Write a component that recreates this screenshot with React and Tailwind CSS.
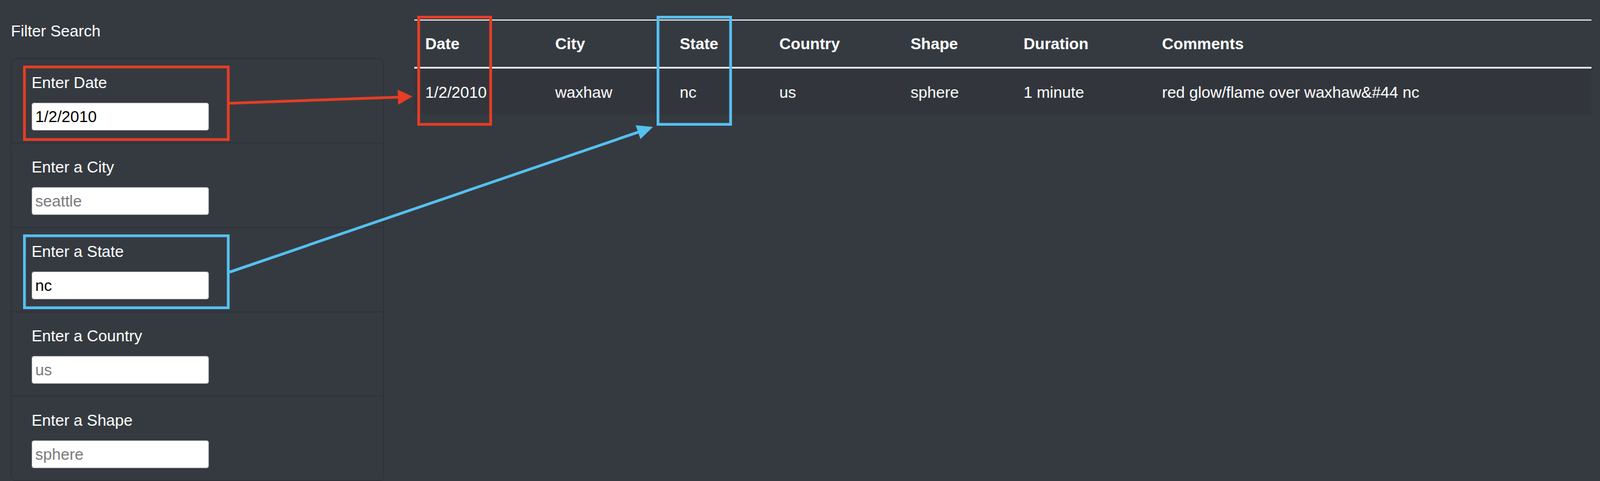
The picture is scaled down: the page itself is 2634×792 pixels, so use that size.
import React from "react";

const fields = [
  { label: "Enter Date", value: "1/2/2010", placeholder: "1/1/2010" },
  { label: "Enter a City", value: "", placeholder: "seattle" },
  { label: "Enter a State", value: "nc", placeholder: "ca" },
  { label: "Enter a Country", value: "", placeholder: "us" },
  { label: "Enter a Shape", value: "", placeholder: "sphere" },
];

const headers = ["Date", "City", "State", "Country", "Shape", "Duration", "Comments"];
const row = ["1/2/2010", "waxhaw", "nc", "us", "sphere", "1 minute", "red glow/flame over waxhaw&#44 nc"];

export default function App() {
  return (
    <div
      className="relative w-[2634px] h-[792px] overflow-hidden bg-[#353a40] text-white flex"
      style={{ fontFamily: '"Liberation Sans", Arial, sans-serif' }}
    >
      {/* Left column */}
      <div className="w-[632px] shrink-0 pl-[18px] pt-[32px]">
        <div className="text-[26px] leading-[39px]">Filter Search</div>
        <ul className="mt-[25px] border border-[#2b2f34] rounded-[8px]">
          {fields.map((f, i) => (
            <li
              key={f.label}
              className={
                i === 0
                  ? "pl-[33px] pr-[33px] pt-[20px] pb-[20px]"
                  : "pl-[33px] pr-[33px] pt-[20px] pb-[20px] border-t border-[#2b2f34]"
              }
            >
              <label className="block text-[26px] leading-[39px] mb-[13px]">{f.label}</label>
              <input
                readOnly
                defaultValue={f.value}
                placeholder={f.placeholder}
                className="block w-[292px] h-[46px] bg-white text-black placeholder:text-[#7a7a7a] border border-[#9a9a9a] rounded-[4px] px-[5px] text-[26px] outline-none"
                style={{ fontFamily: '"Liberation Sans", Arial, sans-serif' }}
              />
            </li>
          ))}
        </ul>
      </div>

      {/* Right column */}
      <div className="ml-[50px] pt-[32px]">
        <table className="table-fixed w-[1938px] border-collapse text-[26px] leading-[39px]">
          <colgroup>
            <col className="w-[214px]" />
            <col className="w-[205px]" />
            <col className="w-[164px]" />
            <col className="w-[216px]" />
            <col className="w-[186px]" />
            <col className="w-[228px]" />
            <col />
          </colgroup>
          <thead>
            <tr className="border-t-2 border-b-[3px] border-[#dee2e6]">
              {headers.map((h) => (
                <th key={h} className="text-left font-bold px-[18px] pt-[19px] pb-[18px] align-top">
                  {h}
                </th>
              ))}
            </tr>
          </thead>
          <tbody>
            <tr className="bg-[#32363c]">
              {row.map((c, i) => (
                <td key={i} className="px-[18px] pt-[20px] pb-[16px] align-top whitespace-nowrap">
                  {c}
                </td>
              ))}
            </tr>
          </tbody>
        </table>
      </div>

      {/* Annotation overlay */}
      <svg
        className="absolute left-0 top-0 pointer-events-none"
        width="2634"
        height="792"
        viewBox="0 0 2634 792"
      >
        <g fill="none" strokeWidth="4.5">
          <rect x="40.25" y="110.25" width="335.5" height="119.5" stroke="#e63d25" />
          <rect x="689.25" y="28.25" width="118.5" height="176.5" stroke="#e63d25" />
          <rect x="40.25" y="388.25" width="335.5" height="118.5" stroke="#56c0f2" />
          <rect x="1083.25" y="28.25" width="119.5" height="176.5" stroke="#56c0f2" />
          <line x1="378" y1="170" x2="656" y2="160" stroke="#e63d25" />
          <line x1="378" y1="448" x2="1051" y2="217.5" stroke="#56c0f2" />
        </g>
        <polygon points="679,159 655.5,172.4 654.6,147.4" fill="#e63d25" />
        <polygon points="1075,209 1054.3,228.9 1046.5,206.2" fill="#56c0f2" />
      </svg>
    </div>
  );
}
